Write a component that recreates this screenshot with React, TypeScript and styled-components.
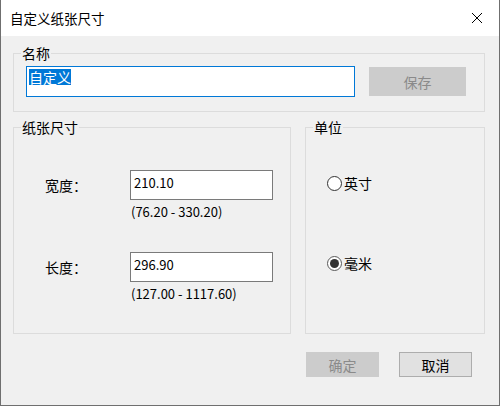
import React, { useState } from "react";
import styled, { createGlobalStyle } from "styled-components";

const GlobalStyle = createGlobalStyle`
  html, body {
    margin: 0;
    padding: 0;
    background: #ffffff;
    overflow: hidden;
  }
  * {
    box-sizing: border-box;
  }
`;

const FONT = `"Noto Sans CJK SC", "Noto Sans", sans-serif`;

export const Window = styled.div`
  display: flex;
  flex-direction: column;
  width: 500px;
  height: 406px;
  background-color: #f0f0f0;
  border: 1px solid #6f6f6f;
  border-top: none;
  font-family: ${FONT};
  color: #000000;
  font-size: 13px;
`;

export const TitleBar = styled.div`
  display: flex;
  align-items: center;
  justify-content: space-between;
  height: 36px;
  padding: 0 16px 0 9px;
  background-color: #ffffff;
  font-size: 13.5px;
`;

export const CloseButton = styled.div`
  display: flex;
  align-items: center;
  justify-content: center;
  width: 12px;
  height: 12px;
`;

export const Body = styled.div`
  display: flex;
  flex-direction: column;
  padding: 8px 14px 0 12px;
`;

export const Group = styled.fieldset<{ $width?: number; $height: number }>`
  margin: 0;
  width: ${(p) => (p.$width ? `${p.$width}px` : "auto")};
  height: ${(p) => p.$height}px;
  border: 1px solid #dcdcdc;
  padding: 0;

  > legend {
    margin-left: 7px;
    padding: 0 1px;
    font-size: 14px;
    line-height: 18px;
  }
`;

export const NameRow = styled.div`
  display: flex;
  align-items: center;
  gap: 14px;
  padding: 4px 0 0 12px;
`;

export const NameInput = styled.div`
  display: flex;
  align-items: flex-start;
  width: 329px;
  height: 31px;
  padding: 2px 2px;
  background: #ffffff;
  border: 1px solid #0078d7;
  font-size: 14px;
  line-height: 16px;

  > span {
    background: #0078d7;
    color: #ffffff;
  }
`;

export const Button = styled.div<{ $disabled?: boolean; $width: number }>`
  display: flex;
  align-items: center;
  justify-content: center;
  width: ${(p) => p.$width}px;
  height: ${(p) => (p.$width > 80 ? 29 : 25)}px;
  background: ${(p) => (p.$disabled ? "#cccccc" : "#e1e1e1")};
  border: 1px solid ${(p) => (p.$disabled ? "#cccccc" : "#adadad")};
  color: ${(p) => (p.$disabled ? "#8a8a8a" : "#000000")};
  font-size: 14px;
`;

export const GroupRow = styled.div`
  display: flex;
  gap: 14px;
  margin-top: 6px;
`;

export const SizeBody = styled.div`
  display: flex;
  flex-direction: column;
  gap: 32px;
  padding: 34px 0 0 31px;
`;

export const Field = styled.div`
  display: grid;
  grid-template-columns: 85px 143px;
  grid-template-rows: 30px auto;
  row-gap: 4px;
  align-items: center;
`;

export const Label = styled.div`
  font-size: 14px;
`;

export const NumberInput = styled.div`
  display: flex;
  align-items: flex-start;
  height: 30px;
  padding: 3px 3px;
  background: #ffffff;
  border: 1px solid #7a7a7a;
  font-size: 13px;
  line-height: 18px;
`;

export const Hint = styled.div`
  grid-column: 2;
  padding-left: 1px;
  font-size: 13px;
  line-height: 16px;
`;

export const UnitBody = styled.div`
  display: flex;
  flex-direction: column;
  gap: 64px;
  padding: 39px 0 0 21px;
`;

export const Radio = styled.label`
  display: flex;
  align-items: center;
  gap: 2px;
  font-size: 14px;
  line-height: 16px;
`;

export const RadioDot = styled.span<{ $checked: boolean }>`
  display: flex;
  align-items: center;
  justify-content: center;
  width: 15px;
  height: 15px;
  border-radius: 50%;
  background: #ffffff;
  border: 1px solid ${(p) => (p.$checked ? "#5a5a5a" : "#333333")};

  &::after {
    content: "";
    display: ${(p) => (p.$checked ? "block" : "none")};
    width: 9px;
    height: 9px;
    border-radius: 50%;
    background: #333333;
  }
`;

export const Footer = styled.div`
  display: flex;
  justify-content: flex-end;
  gap: 20px;
  padding: 18px 13px 0 0;
`;

const App: React.FC = () => {
  const [unit, setUnit] = useState<"inch" | "mm">("mm");

  return (
    <>
      <GlobalStyle />
      <Window>
        <TitleBar>
          <span>自定义纸张尺寸</span>
          <CloseButton>
            <svg width="12" height="12" viewBox="0 0 12 12">
              <path d="M1 1 L11 11 M11 1 L1 11" stroke="#000" strokeWidth="1" />
            </svg>
          </CloseButton>
        </TitleBar>
        <Body>
          <Group $height={68}>
            <legend>名称</legend>
            <NameRow>
              <NameInput>
                <span>自定义</span>
              </NameInput>
              <Button $disabled $width={97}>
                保存
              </Button>
            </NameRow>
          </Group>
          <GroupRow>
            <Group $width={278} $height={216}>
              <legend>纸张尺寸</legend>
              <SizeBody>
                <Field>
                  <Label>宽度：</Label>
                  <NumberInput>210.10</NumberInput>
                  <Hint>(76.20 - 330.20)</Hint>
                </Field>
                <Field>
                  <Label>长度：</Label>
                  <NumberInput>296.90</NumberInput>
                  <Hint>(127.00 - 1117.60)</Hint>
                </Field>
              </SizeBody>
            </Group>
            <Group $width={180} $height={216}>
              <legend>单位</legend>
              <UnitBody>
                <Radio onClick={() => setUnit("inch")}>
                  <RadioDot $checked={unit === "inch"} />
                  英寸
                </Radio>
                <Radio onClick={() => setUnit("mm")}>
                  <RadioDot $checked={unit === "mm"} />
                  毫米
                </Radio>
              </UnitBody>
            </Group>
          </GroupRow>
          <Footer>
            <Button $disabled $width={73}>
              确定
            </Button>
            <Button $width={73}>取消</Button>
          </Footer>
        </Body>
      </Window>
    </>
  );
};

export default App;
